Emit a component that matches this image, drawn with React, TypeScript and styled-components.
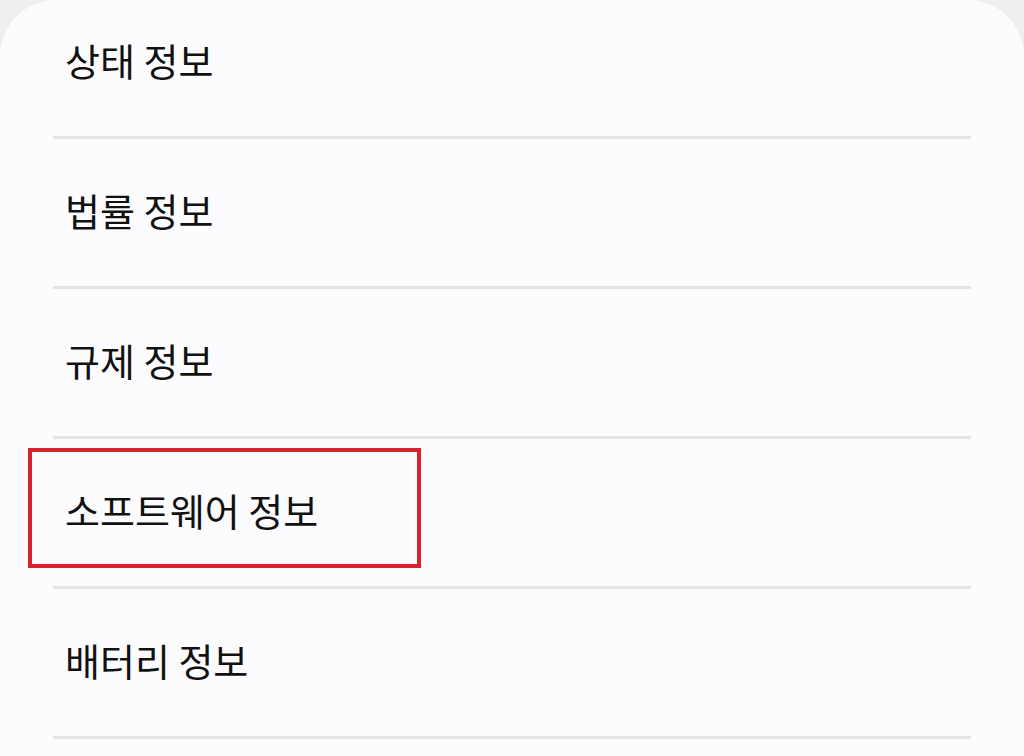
import React from "react";
import styled, { createGlobalStyle } from "styled-components";

const GlobalStyle = createGlobalStyle`
	html, body {
		margin: 0;
		padding: 0;
		background: #efeff1;
	}
	body {
		font-family: "Noto Sans CJK KR", "Noto Sans", sans-serif;
	}
`;

const items = ["상태 정보", "법률 정보", "규제 정보", "소프트웨어 정보", "배터리 정보"];

const App = () => {
	return (
		<>
			<GlobalStyle />
			<Card>
				<List>
					{items.map((label) => (
						<Row key={label}>
							<Label>{label}</Label>
							{label === "소프트웨어 정보" && <Highlight />}
						</Row>
					))}
				</List>
			</Card>
		</>
	);
};

const Card = styled.div`
	width: 1024px;
	height: 756px;
	overflow: hidden;
	background: #fcfcfe;
	border-radius: 56px 56px 0 0;
`;

const List = styled.ul`
	list-style: none;
	margin: -11px 0 0;
	padding: 0 53px;
`;

const Row = styled.li`
	position: relative;
	display: flex;
	align-items: center;
	height: 147px;
	border-bottom: 3px solid #e4e4e6;
	padding-left: 12px;
`;

const Label = styled.span`
	font-size: 38px;
	line-height: 1;
	color: #111111;
	margin-top: -5px;
`;

// annotation box drawn over the row
const Highlight = styled.div`
	position: absolute;
	left: -25px;
	top: 9px;
	width: 385px;
	height: 112px;
	border: 4px solid #d8232f;
	pointer-events: none;
`;

export default App;
